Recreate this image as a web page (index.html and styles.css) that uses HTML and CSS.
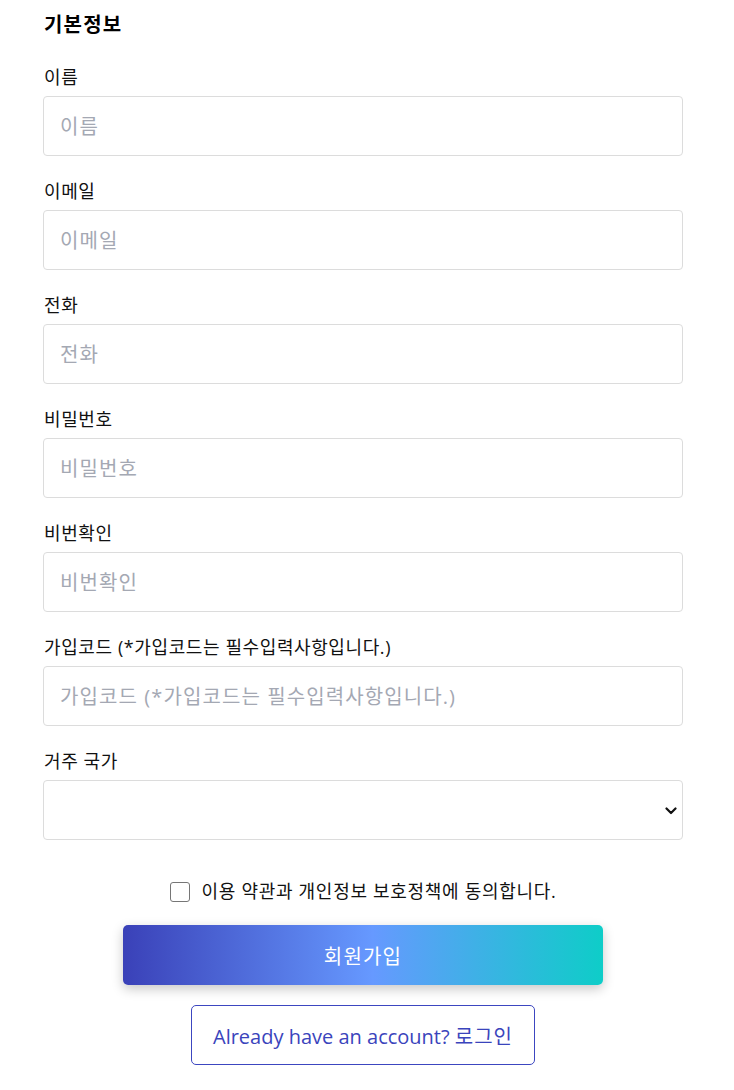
FILE: index.html
```html
<!DOCTYPE html>
<html lang="ko">
<head>
<meta charset="utf-8">
<link rel="stylesheet" href="styles.css">
</head>
<body>
<form class="form">
  <h2 class="title">기본정보</h2>
  <div class="group">
    <label class="label">이름</label>
    <input class="field" type="text" placeholder="이름">
  </div>
  <div class="group">
    <label class="label">이메일</label>
    <input class="field" type="text" placeholder="이메일">
  </div>
  <div class="group">
    <label class="label">전화</label>
    <input class="field" type="text" placeholder="전화">
  </div>
  <div class="group">
    <label class="label">비밀번호</label>
    <input class="field" type="password" placeholder="비밀번호">
  </div>
  <div class="group">
    <label class="label">비번확인</label>
    <input class="field" type="password" placeholder="비번확인">
  </div>
  <div class="group">
    <label class="label">가입코드 (*가입코드는 필수입력사항입니다.)</label>
    <input class="field" type="text" placeholder="가입코드 (*가입코드는 필수입력사항입니다.)">
  </div>
  <div class="group">
    <label class="label">거주 국가</label>
    <div class="select-wrap">
      <select class="field select"><option></option></select>
      <svg class="chev" width="12" height="8" viewBox="0 0 12 8"><path d="M1.5 1.5 L6 6 L10.5 1.5" fill="none" stroke="#111" stroke-width="2.2" stroke-linecap="round" stroke-linejoin="round"/></svg>
    </div>
  </div>
  <label class="agree">
    <input class="check" type="checkbox">
    <span class="agree-text">이용 약관과 개인정보 보호정책에 동의합니다.</span>
  </label>
  <div class="actions">
    <button class="submit" type="button">회원가입</button>
    <button class="login" type="button">Already have an account? <span class="ko">로그인</span></button>
  </div>
</form>
</body>
</html>
```

FILE: styles.css
```css
* { box-sizing: border-box; }
body {
  margin: 0;
  background: #fff;
  font-family: "Open Sans", "Noto Sans CJK KR", sans-serif;
  color: #111;
}
.form {
  width: 640px;
  margin-left: 43px;
  padding-top: 10px;
}
.title {
  margin: 0 0 24px 1px;
  font-size: 20px;
  line-height: 30px;
  font-weight: 700;
  letter-spacing: 1.2px;
  color: #000;
}
.group {
  margin-bottom: 22px;
  display: flex;
  flex-direction: column;
}
.label {
  font-size: 18px;
  line-height: 27px;
  margin: 0 0 5px 1px;
  letter-spacing: 0.6px;
  color: #111;
}
.field {
  width: 640px;
  height: 60px;
  border: 1px solid #dcdcdc;
  border-radius: 4px;
  padding: 0 16px;
  font-family: "Open Sans", "Noto Sans CJK KR", sans-serif;
  font-size: 20px;
  letter-spacing: 1.1px;
  color: #222;
  background: #fff;
  outline: none;
}
.field::placeholder { color: #a4a8b3; }
.select-wrap { position: relative; }
.select { appearance: none; -webkit-appearance: none; }
.chev { position: absolute; right: 6px; top: 27px; }
.agree {
  margin-top: 38px;
  display: flex;
  align-items: center;
  justify-content: center;
  gap: 12px;
  font-size: 18px;
  line-height: 27px;
  color: #111;
}
.agree-text { letter-spacing: 0.7px; }
.check {
  appearance: none;
  -webkit-appearance: none;
  margin: 0;
  width: 20px;
  height: 20px;
  border: 1.5px solid #767676;
  border-radius: 3px;
  background: #fff;
}
.actions {
  display: flex;
  flex-direction: column;
  align-items: center;
  gap: 20px;
  margin-top: 20px;
}
.submit {
  width: 480px;
  height: 60px;
  border: none;
  border-radius: 5px;
  background: linear-gradient(to right, #3a41b8, #6699ff 52%, #0ecdc8);
  color: #fff;
  font-family: "Open Sans", "Noto Sans CJK KR", sans-serif;
  font-size: 20px;
  letter-spacing: 1.2px;
  box-shadow: 0 4px 12px rgba(0,0,0,0.22);
}
.login {
  width: 344px;
  height: 60px;
  border: 1px solid #3c46c0;
  border-radius: 5px;
  background: #fff;
  color: #3a44bc;
  font-family: "Open Sans", "Noto Sans CJK KR", sans-serif;
  font-size: 20px;
}
.login .ko { letter-spacing: 1px; }
```
